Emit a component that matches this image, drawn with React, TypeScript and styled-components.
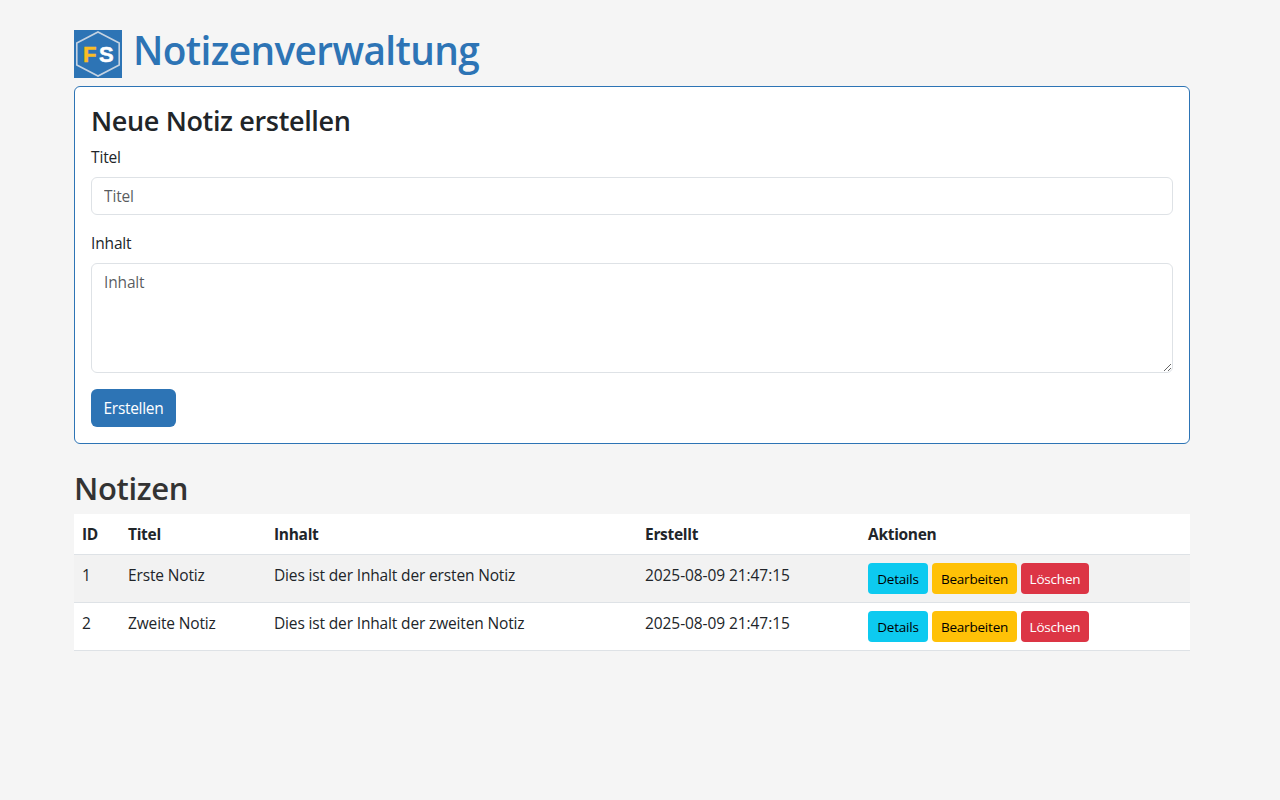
import React from "react";
import styled, { createGlobalStyle } from "styled-components";

const GlobalStyle = createGlobalStyle`
  *, *::before, *::after { box-sizing: border-box; }
  body {
    margin: 0;
    background: #f5f5f5;
    color: #212529;
    font-family: "Segoe UI", "Open Sans", "Noto Sans", sans-serif;
    font-size: 15.5px;
    line-height: 24px;
    letter-spacing: -0.15px;
  }
`;

const Page = styled.main`
  width: 1116px;
  margin-left: 74px;
  padding-top: 30px;
`;

const Header = styled.header`
  display: flex;
  align-items: flex-start;
  gap: 12px;
  height: 48px;
  margin-bottom: 8px;
`;

const Logo = styled.svg`
  display: block;
  width: 48px;
  height: 48px;
`;

const PageTitle = styled.h1`
  margin: -4px 0 0 -1px;
  color: #2d74b5;
  font-size: 38.8px;
  font-weight: 600;
  line-height: 48px;
  letter-spacing: -0.62px;
  white-space: nowrap;
`;

const Card = styled.section`
  height: 358px;
  padding: 17px 16px 16px;
  border: 1px solid #2d74b5;
  border-radius: 6px;
  background: #fff;
`;

const CardTitle = styled.h2`
  margin: 0 0 7px;
  font-size: 27px;
  font-weight: 600;
  line-height: 33.6px;
  letter-spacing: -0.35px;
`;

const Field = styled.div`
  display: flex;
  flex-direction: column;
  gap: 8px;
  margin-bottom: 16px;
`;

const Label = styled.label`
  align-self: flex-start;
`;

const Input = styled.input`
  width: 100%;
  height: 38px;
  padding: 6px 12px;
  border: 1px solid #dee2e6;
  border-radius: 6px;
  background: #fff;
  color: #212529;
  font: inherit;
  letter-spacing: inherit;
  &::placeholder { color: rgba(33, 37, 41, 0.75); opacity: 1; }
`;

const TextArea = styled(Input).attrs({ as: "textarea" })`
  display: block;
  height: 110px;
  resize: vertical;
`;

const SubmitButton = styled.button`
  display: block;
  width: 85px;
  height: 38px;
  padding: 0;
  border: 0;
  border-radius: 6px;
  background: #2d74b5;
  color: #fff;
  font: inherit;
  letter-spacing: -0.3px;
`;

const SectionTitle = styled.h2`
  margin: 25px 0 7px;
  color: #333;
  font-size: 31px;
  font-weight: 600;
  line-height: 38px;
  letter-spacing: -0.35px;
`;

const Table = styled.table`
  width: 100%;
  table-layout: fixed;
  border-collapse: separate;
  border-spacing: 0;
  background: #fff;
`;

const Column = styled.col<{ $width: number }>`
  width: ${({ $width }) => $width}px;
`;

const HeadCell = styled.th`
  height: 41px;
  padding: 8px;
  border-bottom: 1px solid #dee2e6;
  font-weight: 700;
  letter-spacing: -0.3px;
  text-align: left;
  vertical-align: top;
`;

const Row = styled.tr<{ $striped?: boolean }>`
  background: ${({ $striped }) => ($striped ? "#f2f2f2" : "#fff")};
`;

const Cell = styled.td<{ $numeric?: boolean }>`
  height: 48px;
  padding: 8px;
  border-bottom: 1px solid #dee2e6;
  vertical-align: top;
  white-space: nowrap;
  letter-spacing: ${({ $numeric }) => ($numeric ? "-0.08px" : "-0.15px")};
`;

const Actions = styled.div`
  display: flex;
  gap: 4px;
`;

const tones = {
  info: { background: "#0dcaf0", color: "#000", width: 60 },
  warning: { background: "#ffc107", color: "#000", width: 85 },
  danger: { background: "#dc3545", color: "#fff", width: 68 },
};

const ActionButton = styled.button<{ $tone: keyof typeof tones }>`
  width: ${({ $tone }) => tones[$tone].width}px;
  height: 31px;
  padding: 1px 0 0;
  border: 0;
  border-radius: 4px;
  background: ${({ $tone }) => tones[$tone].background};
  color: ${({ $tone }) => tones[$tone].color};
  font: inherit;
  font-size: 13.5px;
  line-height: 21px;
  letter-spacing: -0.2px;
  white-space: nowrap;
`;

const notes = [
  { id: 1, title: "Erste Notiz", content: "Dies ist der Inhalt der ersten Notiz", created: "2025-08-09 21:47:15" },
  { id: 2, title: "Zweite Notiz", content: "Dies ist der Inhalt der zweiten Notiz", created: "2025-08-09 21:47:15" },
];

export default function App() {
  return (
    <>
      <GlobalStyle />
      <Page>
        <Header>
          <Logo viewBox="0 0 48 48" aria-label="FS">
            <rect width="48" height="48" fill="#2d74b5" />
            <path d="M24 2 45.2 13v22L24 46 2.8 35V13Z" fill="none" stroke="#c5d3e2" strokeWidth="1.6" />
            <g fontFamily="Liberation Sans, Arial, sans-serif" fontSize="22" fontWeight="700">
              <text x="9" y="32" fill="#fbbd23" stroke="#fbbd23" strokeWidth=".5">F</text>
              <text x="25" y="32" fill="#fff" stroke="#fff" strokeWidth=".5">S</text>
            </g>
          </Logo>
          <PageTitle>Notizenverwaltung</PageTitle>
        </Header>
        <Card>
          <CardTitle>Neue Notiz erstellen</CardTitle>
          <Field>
            <Label htmlFor="title">Titel</Label>
            <Input id="title" placeholder="Titel" />
          </Field>
          <Field>
            <Label htmlFor="content">Inhalt</Label>
            <TextArea id="content" placeholder="Inhalt" />
          </Field>
          <SubmitButton>Erstellen</SubmitButton>
        </Card>
        <SectionTitle>Notizen</SectionTitle>
        <Table>
          <colgroup>
            <Column $width={46} />
            <Column $width={146} />
            <Column $width={371} />
            <Column $width={223} />
            <Column $width={330} />
          </colgroup>
          <thead>
            <tr>
              <HeadCell>ID</HeadCell>
              <HeadCell>Titel</HeadCell>
              <HeadCell>Inhalt</HeadCell>
              <HeadCell>Erstellt</HeadCell>
              <HeadCell>Aktionen</HeadCell>
            </tr>
          </thead>
          <tbody>
            {notes.map((note, index) => (
              <Row key={note.id} $striped={index % 2 === 0}>
                <Cell>{note.id}</Cell>
                <Cell>{note.title}</Cell>
                <Cell>{note.content}</Cell>
                <Cell $numeric>{note.created}</Cell>
                <Cell>
                  <Actions>
                    <ActionButton $tone="info">Details</ActionButton>
                    <ActionButton $tone="warning">Bearbeiten</ActionButton>
                    <ActionButton $tone="danger">Löschen</ActionButton>
                  </Actions>
                </Cell>
              </Row>
            ))}
          </tbody>
        </Table>
      </Page>
    </>
  );
}
